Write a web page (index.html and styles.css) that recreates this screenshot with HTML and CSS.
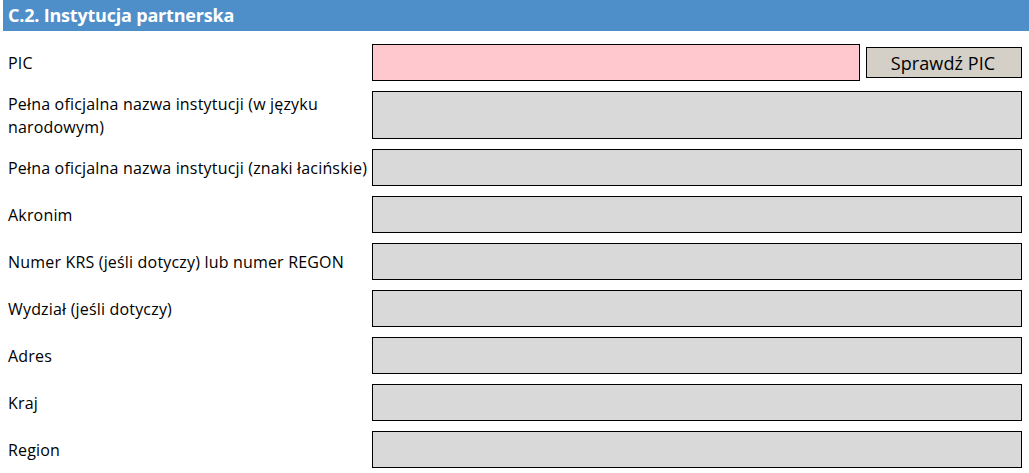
FILE: index.html
```html
<!DOCTYPE html>
<html lang="pl">
<head>
<meta charset="utf-8">
<title>C.2. Instytucja partnerska</title>
<link rel="stylesheet" href="styles.css">
</head>
<body>
<div class="page">
  <div class="header">C.2. Instytucja partnerska</div>
  <div class="form">
    <div class="row">
      <div class="label">PIC</div>
      <div class="control pic-control">
        <div class="field field-pink"></div>
        <button class="btn" type="button">Sprawdź PIC</button>
      </div>
    </div>
    <div class="row row-tall">
      <div class="label label-wrap">Pełna oficjalna nazwa instytucji (w języku narodowym)</div>
      <div class="control"><div class="field"></div></div>
    </div>
    <div class="row">
      <div class="label">Pełna oficjalna nazwa instytucji (znaki łacińskie)</div>
      <div class="control"><div class="field"></div></div>
    </div>
    <div class="row">
      <div class="label">Akronim</div>
      <div class="control"><div class="field"></div></div>
    </div>
    <div class="row">
      <div class="label">Numer KRS (jeśli dotyczy) lub numer REGON</div>
      <div class="control"><div class="field"></div></div>
    </div>
    <div class="row">
      <div class="label">Wydział (jeśli dotyczy)</div>
      <div class="control"><div class="field"></div></div>
    </div>
    <div class="row">
      <div class="label">Adres</div>
      <div class="control"><div class="field"></div></div>
    </div>
    <div class="row">
      <div class="label">Kraj</div>
      <div class="control"><div class="field"></div></div>
    </div>
    <div class="row">
      <div class="label">Region</div>
      <div class="control"><div class="field"></div></div>
    </div>
  </div>
</div>
</body>
</html>
```

FILE: styles.css
```css
html, body {
  margin: 0;
  padding: 0;
  background: #ffffff;
}
body {
  font-family: "Open Sans", "Noto Sans", sans-serif;
  color: #000;
  width: 1029px;
  height: 473px;
  overflow: hidden;
}
.page {
  padding-left: 3px;
}
.header {
  height: 31px;
  background: #4f8fc9;
  color: #fff;
  font-weight: 700;
  font-size: 18px;
  line-height: 31px;
  padding-left: 5px;
  letter-spacing: -0.2px;
}
.form {
  display: flex;
  flex-direction: column;
  gap: 10px;
  padding-top: 13px;
  padding-right: 7px;
}
.row {
  display: flex;
  align-items: center;
  height: 37px;
}
.row-tall {
  height: 48px;
}
.label {
  flex: 0 0 369px;
  box-sizing: border-box;
  padding-left: 5px;
  font-size: 16px;
  line-height: 23px;
  letter-spacing: 0.18px;
  white-space: nowrap;
  padding-top: 1px;
}
.label-wrap {
  white-space: normal;
  padding-right: 8px;
}
.control {
  flex: 1;
  display: flex;
  align-items: center;
  gap: 6px;
  height: 100%;
}
.field {
  flex: 1;
  height: 100%;
  box-sizing: border-box;
  border: 1px solid #000;
  background: #d9d9d9;
}
.field-pink {
  background: #ffc7ce;
}
.btn {
  flex: 0 0 156px;
  height: 31px;
  box-sizing: border-box;
  border: 1px solid #000;
  background: #d4d0c8;
  font-family: "Open Sans", "Noto Sans", sans-serif;
  font-size: 18px;
  color: #000;
  padding: 0 2px 0 0;
  letter-spacing: 0.1px;
}
```
